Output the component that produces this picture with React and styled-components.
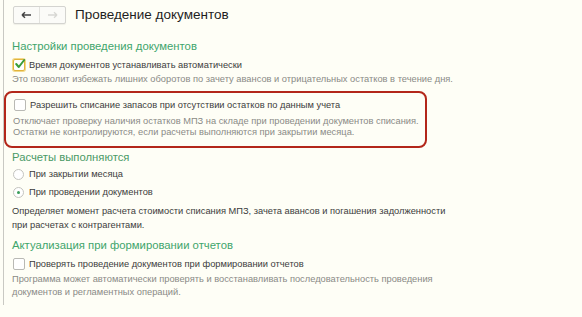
import React from "react";
import styled, { createGlobalStyle } from "styled-components";

const GlobalStyle = createGlobalStyle`
  html, body {
    margin: 0;
    padding: 0;
    background: #fefef6;
  }
  body {
    font-family: "Liberation Sans", Arial, sans-serif;
    color: #3a3a3a;
  }
`;

function Checkbox({ checked, focused }) {
  return (
    <CheckBox $focused={focused}>
      {checked && (
        <svg width="12" height="12" viewBox="0 0 12 12">
          <path d="M2.2 6 L4.8 9 L10.2 2" fill="none" stroke="#3a9d3a" strokeWidth="2" strokeLinecap="round" strokeLinejoin="round" />
        </svg>
      )}
    </CheckBox>
  );
}

function App() {
  return (
    <>
      <GlobalStyle />
      <Page>
        <Header>
          <NavGroup>
            <NavButton>
              <svg width="11" height="8" viewBox="0 0 11 8">
                <path d="M1 4 H10 M1 4 L4 1.2 M1 4 L4 6.8" fill="none" stroke="#444" strokeWidth="1.5" />
              </svg>
            </NavButton>
            <NavButton>
              <svg width="11" height="8" viewBox="0 0 11 8">
                <path d="M1 4 H10 M10 4 L7 1.2 M10 4 L7 6.8" fill="none" stroke="#d8d8d4" strokeWidth="1.3" />
              </svg>
            </NavButton>
          </NavGroup>
          <Title>Проведение документов</Title>
        </Header>

        <Section $top={15}>
          <GroupTitle>Настройки проведения документов</GroupTitle>
          <Row>
            <Checkbox checked focused />
            <Label>Время документов устанавливать автоматически</Label>
          </Row>
          <Note>Это позволит избежать лишних оборотов по зачету авансов и отрицательных остатков в течение дня.</Note>
        </Section>

        <Highlight>
          <Row>
            <Checkbox />
            <Label>Разрешить списание запасов при отсутствии остатков по данным учета</Label>
          </Row>
          <Note $gap={3} $lh={11}>
            Отключает проверку наличия остатков МПЗ на складе при проведении документов списания.
            <br />
            Остатки не контролируются, если расчеты выполняются при закрытии месяца.
          </Note>
        </Highlight>

        <Section $top={2}>
          <GroupTitle $flat>Расчеты выполняются</GroupTitle>
          <RadioRow>
            <Radio />
            <Label>При закрытии месяца</Label>
          </RadioRow>
          <RadioRow>
            <Radio $checked />
            <Label>При проведении документов</Label>
          </RadioRow>
          <Body>
            Определяет момент расчета стоимости списания МПЗ, зачета авансов и погашения задолженности
            <br />
            при расчетах с контрагентами.
          </Body>
        </Section>

        <Section $top={6}>
          <GroupTitle>Актуализация при формировании отчетов</GroupTitle>
          <Row>
            <Checkbox />
            <Label>Проверять проведение документов при формировании отчетов</Label>
          </Row>
          <Note $gap={1} $lh={13}>
            Программа может автоматически проверять и восстанавливать последовательность проведения
            <br />
            документов и регламентных операций.
          </Note>
        </Section>
      </Page>
    </>
  );
}

export default App;

const Page = styled.div`
  position: relative;
  width: 582px;
  height: 317px;
  box-sizing: border-box;
  padding: 0 0 0 4px;
  overflow: hidden;
  &::before {
    content: "";
    position: absolute;
    left: 3px;
    top: 0;
    width: 1px;
    height: 305px;
    background: #c9c9c3;
  }
`;

const Header = styled.div`
  display: flex;
  align-items: center;
  padding: 6px 0 0 9px;
  gap: 9px;
`;

const NavGroup = styled.div`
  display: flex;
  border: 1px solid #d4d4d0;
  border-radius: 2px;
  background: #fbfbf8;
  box-shadow: 0 1px 1px rgba(0, 0, 0, 0.06);
`;

const NavButton = styled.div`
  width: 25px;
  height: 16px;
  display: flex;
  align-items: center;
  justify-content: center;
  & + & {
    border-left: 1px solid #e2e2de;
  }
`;

const Title = styled.div`
  font-size: 13.5px;
  color: #1e1e1e;
  line-height: 18px;
`;

const Section = styled.div`
  padding: ${(p) => p.$top}px 0 0 8px;
`;

const GroupTitle = styled.div`
  font-size: 11.3px;
  color: ${(p) => (p.$flat ? "#4a9a66" : "#3fa56c")};
  line-height: 15px;
  margin-bottom: ${(p) => (p.$flat ? "0" : "2px")};
`;

const Row = styled.div`
  display: flex;
  align-items: center;
  gap: 4px;
  height: 17px;
`;

const CheckBox = styled.div`
  width: 12px;
  height: 12px;
  box-sizing: border-box;
  border: 1px solid ${(p) => (p.$focused ? "#e2b43c" : "#b9b9b4")};
  box-shadow: ${(p) => (p.$focused ? "0 0 0 1px #f2d98a" : "none")};
  border-radius: 2px;
  background: #fff;
  display: flex;
  align-items: center;
  justify-content: center;
  margin-left: 1px;
  svg {
    flex: none;
    margin-top: -2px;
    margin-left: 1px;
  }
`;

const Label = styled.div`
  font-size: 9.3px;
  color: #3c3c3c;
  white-space: nowrap;
`;

const Note = styled.div`
  font-size: 9.3px;
  color: #8a8a86;
  line-height: ${(p) => p.$lh || 13}px;
  margin-top: ${(p) => p.$gap || 0}px;
  white-space: nowrap;
`;

const Highlight = styled.div`
  margin-top: 5px;
  width: 423px;
  height: 57px;
  box-sizing: border-box;
  border: 2px solid #b3271a;
  border-radius: 8px;
  padding: 3px 0 0 7px;
`;

const RadioRow = styled.div`
  display: flex;
  align-items: center;
  gap: 5px;
  height: 18px;
  padding-left: 1px;
`;

const Radio = styled.div`
  width: 11px;
  height: 11px;
  box-sizing: border-box;
  border: 1px solid #c4c4bf;
  border-radius: 50%;
  background: #fff;
  display: flex;
  align-items: center;
  justify-content: center;
  &::after {
    content: "";
    width: 3px;
    height: 3px;
    border-radius: 50%;
    background: ${(p) => (p.$checked ? "#3a9d5a" : "transparent")};
  }
`;

const Body = styled.div`
  font-size: 9.3px;
  color: #3c3c3c;
  line-height: 14px;
  margin-top: 3px;
  white-space: nowrap;
`;
